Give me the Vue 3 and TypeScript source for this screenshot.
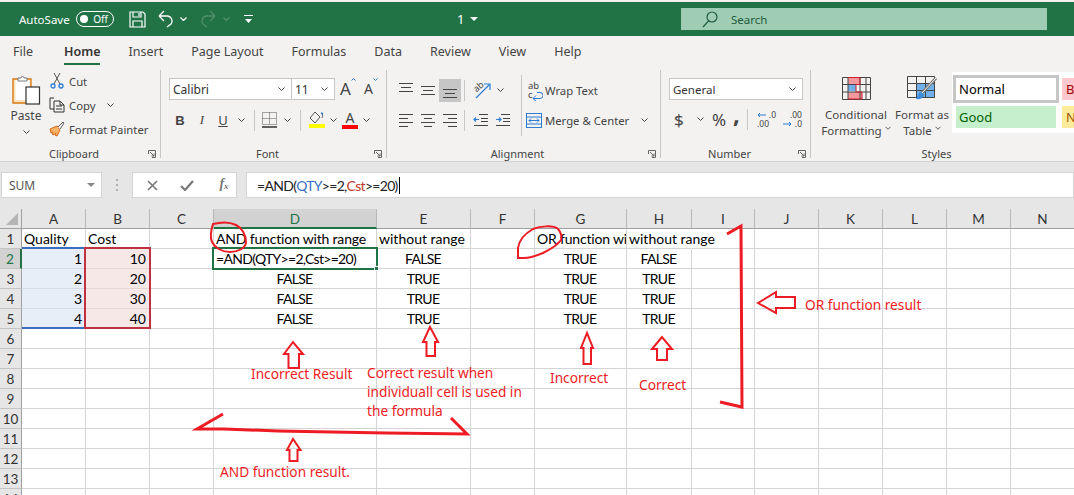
<script setup lang="ts">
type Cell = { text: string; cls?: string };
const tabs = ['File', 'Home', 'Insert', 'Page Layout', 'Formulas', 'Data', 'Review', 'View', 'Help'];
const columns = [
  { name: 'A', width: 64 }, { name: 'B', width: 64 }, { name: 'C', width: 64 }, { name: 'D', width: 163 },
  { name: 'E', width: 94 }, { name: 'F', width: 64 }, { name: 'G', width: 92 }, { name: 'H', width: 65 },
  { name: 'I', width: 63 }, { name: 'J', width: 64 }, { name: 'K', width: 64 }, { name: 'L', width: 64 },
  { name: 'M', width: 64 }, { name: 'N', width: 64 }
];
const rows = Array.from({ length: 14 }, (_, i) => i + 1);
const gridTemplate = '22px ' + columns.map(c => c.width + 'px').join(' ');

const cells: Record<string, Cell> = {
  A1: { text: 'Quality' }, B1: { text: 'Cost' },
  D1: { text: 'AND function with range', cls: 'tight' }, E1: { text: 'without range' },
  G1: { text: 'OR function with range', cls: 'clip tight' }, H1: { text: 'without range', cls: 'over' },
  D2: { text: '=AND(QTY>=2,Cst>=20)', cls: 'fm' },
  D3: { text: 'FALSE', cls: 'mid' }, D4: { text: 'FALSE', cls: 'mid' }, D5: { text: 'FALSE', cls: 'mid' },
  E2: { text: 'FALSE', cls: 'mid' }, E3: { text: 'TRUE', cls: 'mid' }, E4: { text: 'TRUE', cls: 'mid' }, E5: { text: 'TRUE', cls: 'mid' },
  G2: { text: 'TRUE', cls: 'mid' }, G3: { text: 'TRUE', cls: 'mid' }, G4: { text: 'TRUE', cls: 'mid' }, G5: { text: 'TRUE', cls: 'mid' },
  H2: { text: 'FALSE', cls: 'mid' }, H3: { text: 'TRUE', cls: 'mid' }, H4: { text: 'TRUE', cls: 'mid' }, H5: { text: 'TRUE', cls: 'mid' }
};
[1, 2, 3, 4].forEach((n) => {
  cells['A' + (n + 1)] = { text: String(n), cls: 'num qty' };
  cells['B' + (n + 1)] = { text: String(n * 10), cls: 'num cst' };
});
const cellAt = (col: string, row: number): Cell => cells[col + row] ?? { text: '' };
const hideRight = (col: string, row: number) => row === 1 && col === 'H';

const vAlign = [
  { lines: [[1, 15, 1.5], [3, 13, 5.5], [1, 15, 9.5]], hi: false },
  { lines: [[1, 15, 4.5], [3, 13, 8.5], [1, 15, 12.5]], hi: false },
  { lines: [[1, 15, 7.5], [3, 13, 11.5], [1, 15, 15.5]], hi: true }
];
const hAlign = [
  [[1, 15, 1.5], [1, 10, 5.5], [1, 15, 9.5], [1, 10, 13.5]],
  [[1, 15, 1.5], [4, 12, 5.5], [1, 15, 9.5], [4, 12, 13.5]],
  [[1, 15, 1.5], [6, 15, 5.5], [1, 15, 9.5], [6, 15, 13.5]]
];
const linePath = (l: number[][]) => l.map(([a, b, y]) => `M${a} ${y}H${b}`).join('');
</script>

<template>
  <div class="page">
    <header class="titlebar">
      <span class="autosave">AutoSave</span>
      <span class="toggle"><i class="knob"></i><span>Off</span></span>
      <svg class="t-save" width="17" height="17" viewBox="0 0 17 17" fill="none" stroke="#fff" stroke-width="1.2"><path d="M1 1h13l2 2v13H1zM4 1v5h8V1M4 16v-6h9v6M10 2v3"/></svg>
      <svg class="t-undo" width="16" height="18" viewBox="0 0 16 18" fill="none" stroke="#fff" stroke-width="1.3"><path d="M1 6h9a5 5 0 0 1 3 8l-4 3M1 6l5-5M1 6l5 5"/></svg>
      <svg class="t-c1" width="7" height="4" viewBox="0 0 7 4" fill="none" stroke="#fff" stroke-width="1.2"><path d="M.5.5l3 3 3-3"/></svg>
      <svg class="t-redo" width="16" height="18" viewBox="0 0 16 18" fill="none" stroke="#4f8f6c" stroke-width="1.3"><path d="M15 6H6a5 5 0 0 0-3 8l4 3M15 6l-5-5M15 6l-5 5"/></svg>
      <svg class="t-c2" width="7" height="4" viewBox="0 0 7 4" fill="none" stroke="#4f8f6c" stroke-width="1.2"><path d="M.5.5l3 3 3-3"/></svg>
      <svg class="t-cust" width="9" height="8" viewBox="0 0 9 8" fill="#fff"><rect width="9" height="1"/><path d="M1 4h7L4.500 8z"/></svg>
      <span class="doc">1</span>
      <svg class="t-c3" width="8" height="4" viewBox="0 0 8 4" fill="#fff"><path d="M0 0h8L4 4z"/></svg>
      <div class="search">
        <svg width="16" height="17" viewBox="0 0 16 17" fill="none" stroke="#1f5c3c" stroke-width="1.2"><circle cx="10" cy="6" r="5"/><path d="M6.500 10L1 16"/></svg>
        <span>Search</span>
      </div>
    </header>

    <nav class="tabs">
      <span v-for="t in tabs" :key="t" class="tab" :class="{ active: t === 'Home' }">{{ t }}</span>
    </nav>

    <section class="ribbon">
      <div class="group g-clip">
        <div class="body clip-body">
          <div class="paste">
            <svg width="29" height="31" viewBox="0 0 29 31" fill="none">
              <path d="M1 5h18v24H1z" fill="#fbe3bb" stroke="#d97a14" stroke-width="1.400"/>
              <path d="M3.500 6h14v20h-14z" fill="#fff"/>
              <path d="M6 4h3a1.500 1.500 0 0 1 3 0h3v3H6z" fill="#fff" stroke="#7a7a7a"/>
              <rect x="14" y="13" width="13.500" height="17" fill="#fff" stroke="#333" stroke-width="1.200"/>
            </svg>
            <span>Paste</span>
            <svg class="chev" width="7" height="4" viewBox="0 0 7 4"><path d="M.5.5l3 3 3-3" fill="none" stroke="#444"/></svg>
          </div>
          <div class="clip-list">
            <div class="clip-row">
              <svg width="14" height="16" viewBox="0 0 14 16" fill="none"><path d="M4 0l6 11M10 0L4 11" stroke="#555"/><circle cx="3" cy="13" r="2" stroke="#2b7cd3" stroke-width="1.300"/><circle cx="11" cy="13" r="2" stroke="#2b7cd3" stroke-width="1.300"/></svg>
              <span>Cut</span>
            </div>
            <div class="clip-row">
              <svg width="16" height="16" viewBox="0 0 16 16" fill="none" stroke="#333"><path d="M5 1H1v11h4M5 4h6l4 4v7H5zM7 9h6M7 12h6M11 4v4h4"/></svg>
              <span>Copy</span>
              <svg class="copy-chev" width="7" height="4" viewBox="0 0 7 4"><path d="M.5.5l3 3 3-3" fill="none" stroke="#444"/></svg>
            </div>
            <div class="clip-row">
              <svg width="16" height="16" viewBox="0 0 16 16" fill="none"><path d="M1 8l7-3 3 4-3 6-2-1 1-2-2 2-2-1 1-2-2 1z" fill="#f7b267" stroke="#d9691a"/><path d="M9 6l5-5 1 1-4 6" fill="#fff" stroke="#555"/></svg>
              <span>Format Painter</span>
            </div>
          </div>
        </div>
        <div class="label">Clipboard</div>
        <svg class="launcher" width="8" height="8" viewBox="0 0 8 8" fill="none" stroke="#666"><path d="M.5 4V.5H7.500V7.500H4M2 2l4 4M6 3.500V6H3.500"/></svg>
      </div>

      <div class="group g-font">
        <div class="body col">
          <div class="font-top">
            <div class="box fname"><span>Calibri</span><svg width="7" height="4" viewBox="0 0 7 4"><path d="M.5.5l3 3 3-3" fill="none" stroke="#444"/></svg></div>
            <div class="box fsize"><span>11</span><svg width="7" height="4" viewBox="0 0 7 4"><path d="M.5.5l3 3 3-3" fill="none" stroke="#444"/></svg></div>
            <span class="bigA">A<svg width="5" height="3" viewBox="0 0 5 3"><path d="M.5 2.500l2-2 2 2" fill="none" stroke="#2b7cd3"/></svg></span>
            <span class="smallA">A<svg width="5" height="3" viewBox="0 0 5 3"><path d="M.5.500l2 2 2-2" fill="none" stroke="#2b7cd3"/></svg></span>
          </div>
          <div class="font-bottom">
            <b class="fb">B</b>
            <i class="fi">I</i>
            <u class="fu">U</u>
            <svg class="chev" width="7" height="4" viewBox="0 0 7 4"><path d="M.5.5l3 3 3-3" fill="none" stroke="#444"/></svg>
            <span class="vdiv"></span>
            <svg width="15" height="16" viewBox="0 0 15 16" fill="none"><path d="M.5.500h14v12H.500zM7.500.500v12M.5 6.500h14" stroke="#555" stroke-dasharray="1 1"/><path d="M0 15h15" stroke="#222" stroke-width="1.400"/></svg>
            <svg class="chev" width="7" height="4" viewBox="0 0 7 4"><path d="M.5.5l3 3 3-3" fill="none" stroke="#444"/></svg>
            <span class="vdiv"></span>
            <svg width="16" height="18" viewBox="0 0 16 18" fill="none"><path d="M6 1l-5 6 5 5 5-6zM12 2c2 1 2 3 1 5" stroke="#555"/><path d="M12 2l2 1" stroke="#2b7cd3" stroke-width="1.400"/><rect y="13" width="16" height="4" fill="#ffff00"/></svg>
            <svg class="chev" width="7" height="4" viewBox="0 0 7 4"><path d="M.5.5l3 3 3-3" fill="none" stroke="#444"/></svg>
            <span class="colorA">A</span>
            <svg class="chev" width="7" height="4" viewBox="0 0 7 4"><path d="M.5.5l3 3 3-3" fill="none" stroke="#444"/></svg>
          </div>
        </div>
        <div class="label">Font</div>
        <svg class="launcher" width="8" height="8" viewBox="0 0 8 8" fill="none" stroke="#666"><path d="M.5 4V.5H7.500V7.500H4M2 2l4 4M6 3.500V6H3.500"/></svg>
      </div>

      <div class="group g-align">
        <div class="body col">
          <div class="al-row al-top">
            <span v-for="(v, i) in vAlign" :key="i" class="al-btn" :class="{ hi: v.hi }">
              <svg width="16" height="17" viewBox="0 0 16 17" fill="none" stroke="#444"><path :d="linePath(v.lines)"/></svg>
            </span>
            <span class="vdiv"></span>
            <span class="orient">
              <span class="orient-t">ab</span>
              <svg width="18" height="17" viewBox="0 0 18 17" fill="none"><path d="M3 16L16 3M11 2h6v6" stroke="#2b7cd3" stroke-width="1.200"/></svg>
            </span>
            <svg class="chev" width="7" height="4" viewBox="0 0 7 4"><path d="M.5.5l3 3 3-3" fill="none" stroke="#444"/></svg>
            <span class="vdiv wide"></span>
            <span class="wrap"><span class="wrap-ic">ab<br>c</span><svg class="wrap-arrow" width="11" height="9" viewBox="0 0 11 9" fill="none" stroke="#2b7cd3"><path d="M5 .5h3a3 3 0 0 1 0 6H1M4 3.500l-3 3 3 2.500"/></svg><span>Wrap Text</span></span>
          </div>
          <div class="al-row al-bottom">
            <span v-for="(h, i) in hAlign" :key="i" class="al-btn">
              <svg width="16" height="15" viewBox="0 0 16 15" fill="none" stroke="#444"><path :d="linePath(h)"/></svg>
            </span>
            <span class="vdiv"></span>
            <svg width="15" height="13" viewBox="0 0 15 13" fill="none"><path d="M6 1.500h9M8 5.500h7M8 8.500h7M1 12.500h14" stroke="#444" transform="translate(0 -1)"/><path d="M6 5.500H1M3 3.500l-2 2 2 2" stroke="#2b7cd3" stroke-width="1.200"/></svg>
            <svg class="in2" width="15" height="13" viewBox="0 0 15 13" fill="none"><path d="M6 .5h9M8 4.500h7M8 7.500h7M1 11.500h14" stroke="#444"/><path d="M1 5.500h5M4 3.500l2 2-2 2" stroke="#2b7cd3" stroke-width="1.200"/></svg>
            <span class="vdiv wide2"></span>
            <span class="merge">
              <svg width="16" height="15" viewBox="0 0 16 15" fill="none"><rect x=".5" y=".5" width="15" height="14" stroke="#2b7cd3"/><path d="M.5 4h15M.5 11h15M3 7.500h10M5 5.500l-2 2 2 2M11 5.500l2 2-2 2" stroke="#2b7cd3"/></svg>
              <span>Merge &amp; Center</span>
              <svg class="chev merge-chev" width="7" height="4" viewBox="0 0 7 4"><path d="M.5.5l3 3 3-3" fill="none" stroke="#444"/></svg>
            </span>
          </div>
        </div>
        <div class="label">Alignment</div>
        <svg class="launcher" width="8" height="8" viewBox="0 0 8 8" fill="none" stroke="#666"><path d="M.5 4V.5H7.500V7.500H4M2 2l4 4M6 3.500V6H3.500"/></svg>
      </div>

      <div class="group g-num">
        <div class="body col">
          <div class="box nfmt"><span>General</span><svg width="7" height="4" viewBox="0 0 7 4"><path d="M.5.5l3 3 3-3" fill="none" stroke="#444"/></svg></div>
          <div class="num-row">
            <span class="dollar">$</span>
            <svg class="chev" width="7" height="4" viewBox="0 0 7 4"><path d="M.5.5l3 3 3-3" fill="none" stroke="#444"/></svg>
            <span class="pct">%</span>
            <span class="comma">,</span>
            <span class="vdiv"></span>
            <span class="dec"><span class="dec-t">.0</span><span class="dec-t dec-b">.00</span><svg class="dec-a" width="9" height="6" viewBox="0 0 9 6" fill="none" stroke="#2b7cd3"><path d="M9 3H1M3 1L1 3l2 2"/></svg></span>
            <span class="dec"><span class="dec-t">.00</span><span class="dec-t dec-b dec-r">.0</span><svg class="dec-a" width="9" height="6" viewBox="0 0 9 6" fill="none" stroke="#2b7cd3"><path d="M0 3h8M6 1l2 2-2 2"/></svg></span>
          </div>
        </div>
        <div class="label">Number</div>
        <svg class="launcher" width="8" height="8" viewBox="0 0 8 8" fill="none" stroke="#666"><path d="M.5 4V.5H7.500V7.500H4M2 2l4 4M6 3.500V6H3.500"/></svg>
      </div>

      <div class="group g-styles">
        <div class="body styles-body">
          <div class="big-btn cf">
            <svg width="29" height="23" viewBox="0 0 29 23" fill="none">
              <rect x="6" y=".5" width="12" height="7" fill="#f5989d"/><rect x="6" y="7" width="8" height="7" fill="#6fb1e8"/><rect x="6" y="15" width="14" height="7" fill="#f5989d"/>
              <path d="M.5.5h28v22H.5zM.5 7.500h28M.5 15h28M6 .5v22M18 .5v22M24 .5v22" stroke="#444"/>
              <path d="M6 .5h12v7h-4v7.500h6v7H6" stroke="#c8202a"/>
            </svg>
            <span>Conditional</span>
            <span>Formatting <svg width="6" height="4" viewBox="0 0 7 4"><path d="M.5.5l3 3 3-3" fill="none" stroke="#444"/></svg></span>
          </div>
          <div class="big-btn ft">
            <svg width="31" height="25" viewBox="0 0 31 25" fill="none">
              <rect x="10" y="8" width="18" height="14" fill="#6fb1e8"/>
              <path d="M.5.5h27v21H.5zM.5 7.500h27M.5 14.500h27M9.500.5v21M18.500.5v21" stroke="#444"/>
              <path d="M29 2L15 17" stroke="#777" stroke-width="3"/><path d="M29 2L15 17" stroke="#fff"/><path d="M9 23c3 1 7 0 8-4l-3-3c-3 0-3 4-5 7z" fill="#3e8ddd"/>
            </svg>
            <span>Format as</span>
            <span>Table <svg width="6" height="4" viewBox="0 0 7 4"><path d="M.5.5l3 3 3-3" fill="none" stroke="#444"/></svg></span>
          </div>
          <div class="gallery">
            <span class="st normal">Normal</span><span class="st bad">Bad</span>
            <span class="st good">Good</span><span class="st neutral">Neutral</span>
          </div>
        </div>
        <div class="label">Styles</div>
      </div>
    </section>

    <section class="fbar">
      <div class="namebox"><span>SUM</span><i class="tri"></i></div>
      <div class="dots"><i></i><i></i><i></i></div>
      <div class="fbtns">
        <svg width="11" height="11" viewBox="0 0 11 11" stroke="#7a7a7a" stroke-width="1.700"><path d="M1 1l9 9M10 1l-9 9"/></svg>
        <svg width="14" height="11" viewBox="0 0 14 11" fill="none" stroke="#7a7a7a" stroke-width="2.200"><path d="M1 6l4 4 8-9"/></svg>
        <span class="fx">f<sub>x</sub></span>
      </div>
      <div class="finput">=AND(<span class="c-q">QTY</span>&gt;=2,<span class="c-c">Cst</span>&gt;=20)<i class="caret"></i></div>
    </section>

    <section class="sheet" :style="{ gridTemplateColumns: gridTemplate }">
      <div class="corner"><svg width="12" height="12" viewBox="0 0 12 12"><path d="M12 0v12H0z" fill="#b4b4b4"/></svg></div>
      <div v-for="c in columns" :key="c.name" class="colhead" :class="{ sel: c.name === 'D' }">{{ c.name }}</div>
      <template v-for="r in rows" :key="r">
        <div class="rowhead" :class="{ sel: r === 2 }">{{ r }}</div>
        <div
          v-for="c in columns"
          :key="c.name"
          class="cell"
          :class="[cellAt(c.name, r).cls, { noright: hideRight(c.name, r) }]"
        >{{ cellAt(c.name, r).text }}</div>
      </template>
      <div class="range-a"></div>
      <div class="range-b"></div>
      <div class="active-cell"><i></i></div>
    </section>

    <svg class="ink" width="1074" height="495" viewBox="0 0 1074 495" fill="none" stroke="#ed1c24">
      <path stroke-width="2" d="M213 224c8-2 17-2 23 1 6 3 10 10 10 17 0 6-8 10-16 10-8 0-15-4-18-10-2-5-1-12 1-18z"/>
      <path stroke-width="2" d="M518 258v-10c1-8 8-15 15-19 7-3 20-4 25 0 3 3 4 8 3 11-4 6-12 10-18 13-7 3-13 5-19 5z"/>
      <g stroke-width="2">
        <path d="M293 342l-9 12h4.500v14h10.500v-14h4z"/>
        <path d="M430 327l-7 15h3.500v14h8.500v-14h3z"/>
        <path d="M587 333l-6 15h2.500v16h7.500v-16h2z"/>
        <path d="M662 337l-10 12h5v11h10v-11h5z"/>
        <path d="M293 439l-6 11h2.500v11h8v-11h3z"/>
        <path d="M758 303l18-11v5h19v11h-19v5z"/>
      </g>
      <g stroke-width="3">
        <path d="M727 234l14-8 1 181-22-5"/>
        <path d="M223 414L197 429H224L278 431L332 432L386 433L467 434L451 418"/>
      </g>
    </svg>
    <span class="note n1">Incorrect Result</span>
    <span class="note n2">Correct result when<br>individuall cell is used in<br>the formula</span>
    <span class="note n3">Incorrect</span>
    <span class="note n4">Correct</span>
    <span class="note n5">OR function result</span>
    <span class="note n6">AND function result.</span>
  </div>
</template>

<style>
html, body { margin: 0; background: #e6e6e6; }
</style>

<style scoped>
.page {
  position: relative;
  width: 1074px;
  height: 495px;
  overflow: hidden;
  background: #f3f2f1;
  font-family: "Noto Sans", "Open Sans", sans-serif;
  color: #444;
}
svg { display: block; flex: none; }

.titlebar {
  display: flex;
  align-items: center;
  height: 34px;
  margin-top: 2px;
  background: #217346;
  color: #fff;
  font-size: 11.500px;
}
.autosave { margin-left: 19px; width: 51px; }
.toggle {
  display: flex; align-items: center; justify-content: space-between;
  box-sizing: border-box;
  width: 38px; height: 16px; margin-left: 6px; padding: 0 5px 0 3px;
  border: 1px solid #fff; border-radius: 8px;
  font-size: 10px;
}
.knob { width: 8px; height: 8px; background: #fff; border-radius: 50%; }
.t-save { margin-left: 15px; }
.t-undo { margin-left: 12px; }
.t-c1 { margin-left: 6px; }
.t-redo { margin-left: 13px; }
.t-c2 { margin-left: 7px; }
.t-cust { margin-left: 14px; }
.doc { margin-left: 204px; width: 9px; font-size: 13px; }
.t-c3 { margin-left: 4px; }
.search {
  display: flex; align-items: center; gap: 13px;
  box-sizing: border-box;
  width: 366px; height: 22px; margin-left: 203px; padding-left: 21px;
  background: #9fcdb3; color: #1f5c3c; font-size: 11.500px;
}

.tabs {
  display: flex;
  gap: 28px;
  height: 34px;
  padding-left: 13px;
  font-size: 12.500px;
  line-height: 31px;
  box-sizing: border-box;
}
.tab { position: relative; height: 27px; }
.tab:first-child { margin-right: 3px; }
.tab.active { font-weight: 600; color: #333; border-bottom: 2px solid #217346; }

.ribbon {
  display: flex;
  height: 92px;
  font-size: 11.300px;
  border-bottom: 1px solid #d2d2d2;
  box-sizing: border-box;
  background: #f3f2f1;
}
.group {
  position: relative;
  display: flex; flex-direction: column;
  box-sizing: border-box;
  height: 88px;
  border-right: 1.500px solid #c6c6c6;
}
.g-clip { width: 161px; }
.g-font { width: 226px; }
.g-align { width: 274px; }
.g-num { width: 150px; }
.g-styles { flex: 1; border-right: 0; min-width: 0; }
.body { flex: 1; min-height: 0; }
.col { display: flex; flex-direction: column; }
.label { height: 12px; line-height: 16px; text-align: center; font-size: 11px; padding-right: 12px; }
.launcher { position: absolute; right: 4px; bottom: 0; }

.clip-body { display: flex; }
.paste {
  display: flex; flex-direction: column; align-items: center;
  width: 38px; margin-left: 7px; padding-top: 4px;
}
.paste span { margin-top: 2px; font-size: 12px; line-height: 17px; }
.paste .chev { margin-top: 6px; }
.clip-list { display: flex; flex-direction: column; margin-left: 4px; margin-top: -1px; }
.clip-row { display: flex; align-items: center; gap: 3px; height: 24px; }
.clip-row svg:first-child { width: 16px; }
.clip-row span { margin-left: 1px; }
.copy-chev { margin-left: 9px; }

.font-top { display: flex; align-items: center; height: 42px; padding: 0 0 12px 8px; box-sizing: border-box; margin-top: 4px; }
.box {
  display: flex; align-items: center; justify-content: space-between;
  box-sizing: border-box;
  height: 22px;
  padding: 0 6px 0 3px;
  background: #fff;
  border: 1px solid #c6c6c6;
  color: #333;
  font-size: 12px;
}
.fname { width: 123px; }
.fsize { width: 43px; border-left: 0; }
.bigA { display: flex; margin-left: 5px; font-size: 17px; width: 24px; line-height: 22px; }
.smallA { display: flex; font-size: 14px; width: 14px; line-height: 22px; }
.font-bottom {
  display: grid;
  grid-template-columns: 18px 26px 16px 20px 6px 25px 10px 16px 18px 15px 18px 14px;
  align-items: center; justify-items: center;
  margin-left: 10px; height: 22px; margin-top: -7px;
}
.fb, .fi, .fu { font-size: 13px; color: #444; }
.fb { font-weight: 700; font-family: "Liberation Sans", sans-serif; }
.fi { font-family: "Liberation Serif", serif; }
.vdiv { display: block; width: 1px; height: 21px; background: #c6c6c6; }
.colorA { font-size: 14px; border-bottom: 4px solid #ff0000; line-height: 14px; width: 16px; text-align: center; }

.al-row { display: flex; align-items: center; height: 24px; padding-left: 8px; }
.al-top { margin-top: 8px; }
.al-bottom { margin-top: 6px; }
.al-btn { display: flex; align-items: center; justify-content: center; width: 22px; height: 23px; }
.al-btn.hi { background: #c6c6c6; }
.al-row .vdiv { margin: 0 5px 0 3px; }
.orient { position: relative; margin-left: 3px; }
.orient-t { position: absolute; left: 0; top: -1px; font-size: 9px; line-height: 11px; transform: rotate(-40deg); }
.al-top .chev { margin-left: 6px; }
.al-top .vdiv.wide { margin: 0 6px 0 17px; height: 31px; }
.wrap { display: flex; align-items: center; position: relative; }
.wrap-ic { font-size: 9.500px; line-height: 9px; width: 17px; }
.wrap-arrow { position: absolute; left: 4px; top: 11px; }
.al-bottom > svg:first-of-type { margin-left: 3px; }
.in2 { margin-left: 7px; }
.al-bottom .vdiv.wide2 { margin: 0 4px 0 11px; height: 31px; }
.merge { display: flex; align-items: center; gap: 3px; }
.merge-chev { margin-left: 9px; }

.g-num .body { padding: 8px 0 0 8px; }
.nfmt { width: 134px; font-size: 11.500px; }
.num-row {
  display: flex; align-items: center;
  height: 24px; margin-top: 7px; padding-left: 5px;
}
.dollar { font-size: 17px; width: 23px; }
.pct { font-size: 17px; margin-left: 8px; width: 21px; }
.comma { font-size: 24px; font-weight: 700; line-height: 14px; height: 24px; width: 14px; }
.num-row .vdiv { margin-right: 9px; }
.dec { position: relative; width: 19px; height: 18px; margin-right: 7px; font-size: 8.500px; line-height: 9px; }
.dec-t { position: absolute; right: 0; top: 0; }
.dec-b { top: 9px; left: 0; right: auto; }
.dec-r { left: auto; right: 0; }
.dec-a { position: absolute; left: 0; top: 2px; }
.dec:last-child .dec-a { top: 11px; }

.styles-body { display: flex; }
.big-btn {
  display: flex; flex-direction: column; align-items: center;
  font-size: 11.500px; line-height: 16px;
  padding-top: 7px;
  white-space: nowrap;
}
.big-btn span { display: flex; align-items: center; gap: 3px; }
.big-btn svg:first-child { margin-bottom: 7px; }
.cf { width: 84px; margin-left: 10px; }
.ft { width: 60px; margin-left: 4px; padding-top: 6px; }
.ft svg:first-child { margin-bottom: 6px; }
.gallery {
  display: grid;
  grid-template-columns: 106px 60px;
  grid-template-rows: 28px 22px;
  column-gap: 3px; row-gap: 3px;
  box-sizing: border-box;
  width: 122px; height: 61px;
  margin: 2px 0 0 3px;
  padding: 3px 0 0 1px;
  background: #fff;
  font-size: 13px;
  flex: none;
  overflow: hidden;
}
.st { display: flex; align-items: center; padding-left: 5px; box-sizing: border-box; }
.normal { border: 3px solid #c6c6c6; color: #000; padding-left: 3px; }
.bad { background: #ffc7ce; color: #9c0006; margin: 3px 0; padding-left: 4px; }
.good { background: #c6efce; color: #006100; margin: 0 3px; padding-left: 3px; }
.neutral { background: #ffeb9c; color: #9c5700; padding-left: 4px; }

.fbar {
  display: flex; align-items: flex-start;
  box-sizing: border-box;
  height: 47px; padding: 10px 0 0 1px;
  background: #e6e6e6;
}
.namebox {
  display: flex; align-items: center; justify-content: space-between;
  box-sizing: border-box;
  width: 101px; height: 26px; padding: 0 6px 0 7px;
  background: #fff; border: 1px solid #d4d4d4;
  font-size: 12px; color: #555;
}
.tri { width: 0; height: 0; border: 4px solid transparent; border-top: 4px solid #888; border-bottom: 0; }
.dots { display: flex; flex-direction: column; gap: 3px; width: 3px; margin: 7px 13px 0 14px; }
.dots i { width: 2px; height: 2px; background: #b0b0b0; }
.fbtns {
  display: flex; align-items: center; justify-content: space-between;
  box-sizing: border-box;
  width: 105px; height: 26px; padding: 0 3px 0 14px;
  background: #fff; border: 1px solid #d4d4d4;
}
.fx { font-family: "Liberation Serif", serif; font-style: italic; font-weight: 700; font-size: 14px; color: #777; line-height: 14px; width: 18px; text-align: center; }
.fx sub { font-size: 9px; vertical-align: -1px; }
.finput {
  display: flex; align-items: center;
  flex: 1; box-sizing: border-box;
  height: 26px; margin-left: 9px; padding-left: 10px;
  background: #fff; border: 1px solid #d4d4d4;
  font-family: Lato, "Noto Sans", sans-serif; font-size: 14px; color: #222;
  letter-spacing: -0.7px;
  white-space: pre;
}
.c-q { color: #3c6fc4; }
.c-c { color: #c0392b; }
.caret { width: 1px; height: 17px; background: #000; margin-left: 1px; }

.sheet {
  position: relative;
  display: grid;
  grid-template-rows: 20px repeat(14, 20px);
  background: #fff;
  font-family: Lato, "Noto Sans", sans-serif;
  font-size: 14px;
  color: #000;
}
.corner {
  display: flex; align-items: flex-end; justify-content: flex-end;
  box-sizing: border-box; padding: 0 3px 3px 0;
  background: #e6e6e6; border-bottom: 1px solid #a0a0a0; border-right: 1px solid #a0a0a0;
}
.colhead {
  box-sizing: border-box; text-align: center; line-height: 20px;
  background: #e6e6e6;
  border-bottom: 1px solid #a0a0a0;
  border-right: 1px solid #b8b8b8;
  color: #333;
  font-size: 13.500px;
}
.colhead.sel { background: #d2d2d2; border-bottom: 2px solid #217346; color: #217346; }
.rowhead {
  box-sizing: border-box; text-align: center; line-height: 20px;
  background: #e6e6e6;
  border-right: 1px solid #a0a0a0;
  border-bottom: 1px solid #c4c4c4;
  color: #333;
  font-size: 13.500px;
}
.rowhead.sel { background: #d2d2d2; border-right: 2px solid #217346; color: #217346; }
.cell {
  box-sizing: border-box;
  min-width: 0;
  padding: 0 3px 0 2px;
  border-right: 1px solid #d4d4d4;
  border-bottom: 1px solid #d4d4d4;
  line-height: 20px;
  white-space: nowrap;
}
.cell.mid { text-align: center; letter-spacing: -0.7px; }
.cell.num { text-align: right; }
.cell.tight { letter-spacing: -0.18px; }
.cell.fm { letter-spacing: -0.7px; }
.cell.qty { background: #e7eef8; border-color: #d3dbe6; }
.cell.cst { background: #f7e8e8; border-color: #e6d5d5; }
.cell.clip { overflow: hidden; }
.cell.over { position: relative; z-index: 1; overflow: visible; background: transparent; }
.cell.noright { border-right-color: transparent; }
.range-a {
  position: absolute; left: 22px; top: 38px;
  box-sizing: border-box; width: 63px; height: 82px;
  border-top: 2px solid #3c6fc4; border-bottom: 2px solid #3c6fc4;
}
.range-b {
  position: absolute; left: 84px; top: 38px;
  box-sizing: border-box; width: 67px; height: 82px;
  border: 2px solid #c0323f;
}
.active-cell {
  position: absolute; left: 212px; top: 38px;
  box-sizing: border-box; width: 166px; height: 23px;
  border: 2px solid #217346;
}
.active-cell i {
  position: absolute; right: -3px; bottom: -3px;
  width: 5px; height: 5px; background: #217346; border: 1px solid #fff; box-sizing: border-box;
}

.ink { position: absolute; left: 0; top: 0; pointer-events: none; }
.note {
  position: absolute;
  color: #ed1c24;
  font-size: 13.700px;
  line-height: 19px;
  white-space: nowrap;
}
.n1 { left: 251px; top: 364px; }
.n2 { left: 367px; top: 363px; }
.n3 { left: 550px; top: 368px; }
.n4 { left: 639px; top: 375px; }
.n5 { left: 805px; top: 295px; }
.n6 { left: 220px; top: 462px; }
</style>
